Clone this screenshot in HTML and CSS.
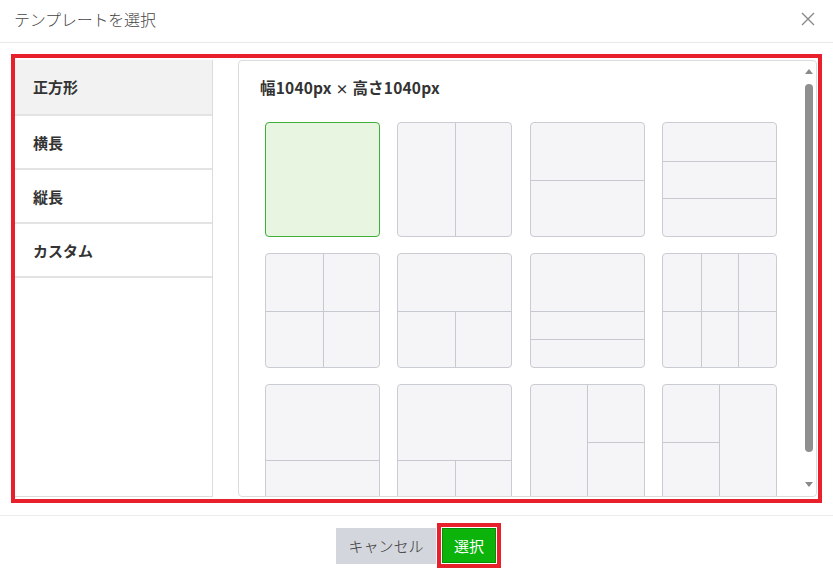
FILE: index.html
```html
<!DOCTYPE html>
<html lang="ja">
<head>
<meta charset="utf-8">
<title>テンプレートを選択</title>
<link rel="stylesheet" href="styles.css">
</head>
<body>
<div class="modal">
  <div class="modal-header">
    <span class="modal-title">テンプレートを選択</span>
    <svg class="close" width="14" height="14" viewBox="0 0 14 14"><path d="M1 1L13 13M13 1L1 13" stroke="#888" stroke-width="1.4" fill="none"/></svg>
  </div>
  <div class="modal-body">
    <div class="highlight">
      <ul class="sidebar">
        <li class="side-item active">正方形</li>
        <li class="side-item">横長</li>
        <li class="side-item">縦長</li>
        <li class="side-item">カスタム</li>
      </ul>
      <div class="panel">
        <div class="panel-scroll">
          <div class="panel-title">幅1040px <span class="times">×</span> 高さ1040px</div>
          <div class="grid">
            <div class="tile selected"></div>
            <div class="tile"><span class="vl" style="left:50%"></span></div>
            <div class="tile"><span class="hl" style="top:50%"></span></div>
            <div class="tile"><span class="hl" style="top:33.3%"></span><span class="hl" style="top:66.7%"></span></div>

            <div class="tile"><span class="vl" style="left:50%"></span><span class="hl" style="top:50%"></span></div>
            <div class="tile"><span class="hl" style="top:50%"></span><span class="vl" style="left:50%;top:50%"></span></div>
            <div class="tile"><span class="hl" style="top:50%"></span><span class="hl" style="top:75%"></span></div>
            <div class="tile"><span class="vl" style="left:33.3%"></span><span class="vl" style="left:66.7%"></span><span class="hl" style="top:50%"></span></div>

            <div class="tile"><span class="hl" style="top:66.7%"></span></div>
            <div class="tile"><span class="hl" style="top:66.7%"></span><span class="vl" style="left:50%;top:66.7%"></span></div>
            <div class="tile"><span class="vl" style="left:50%"></span><span class="hl" style="top:50%;left:50%"></span></div>
            <div class="tile"><span class="vl" style="left:50%"></span><span class="hl" style="top:50%;right:50%"></span></div>
          </div>
        </div>
        <div class="scrollbar">
          <span class="arrow up"></span>
          <span class="thumb"></span>
          <span class="arrow down"></span>
        </div>
      </div>
    </div>
  </div>
  <div class="modal-footer">
    <button class="btn btn-cancel">キャンセル</button>
    <span class="btn-outline"><button class="btn btn-select">選択</button></span>
  </div>
</div>
</body>
</html>
```
FILE: styles.css
```css
* { box-sizing: border-box; }
html, body { margin: 0; padding: 0; background: #fff; }
body {
  font-family: "Noto Sans CJK JP", "Noto Sans", "Liberation Sans", sans-serif;
  color: #333;
  width: 833px;
  height: 575px;
  overflow: hidden;
}
.modal { display: flex; flex-direction: column; height: 575px; }
.modal-header {
  height: 43px;
  display: flex;
  align-items: center;
  justify-content: space-between;
  padding: 0 18px 4px 14px;
  border-bottom: 1px solid #e8e8e8;
}
.modal-title { font-size: 16px; font-weight: 300; color: #444; letter-spacing: -0.2px; }
.close { display: block; }

.modal-body { padding: 11px 11px 0 11px; }
.highlight {
  border: 4px solid #e8202b;
  height: 449px;
  display: flex;
  padding: 2px 1px 2px 0;
  gap: 25px;
}
.sidebar {
  list-style: none;
  margin: 0;
  padding: 0;
  width: 198px;
  border: 1px solid #dcdcdc;
  border-left: none;
  border-top: none;
}
.side-item {
  height: 54px;
  display: flex;
  align-items: center;
  padding-left: 18px;
  font-size: 15px;
  font-weight: 700;
  color: #333;
  border-bottom: 2px solid #e3e3e3;
}
.side-item.active { background: #f2f2f2; height: 56px; padding-bottom: 2px; }

.panel {
  flex: 1;
  position: relative;
  border: 1px solid #dcdcdc;
  border-radius: 4px;
  overflow: hidden;
}
.panel-scroll { height: 100%; overflow: hidden; }
.panel-title {
  font-size: 15.5px;
  font-weight: 700;
  color: #333;
  padding: 16px 0 0 21px;
  line-height: 21px;
  height: 61px;
  letter-spacing: 0.2px;
}
.times { font-size: 13px; }
.grid {
  display: grid;
  grid-template-columns: repeat(4, 115px);
  grid-auto-rows: 115px;
  column-gap: 17.33px;
  row-gap: 16px;
  padding-left: 26px;
}
.tile {
  position: relative;
  background: #f5f5f7;
  border: 1px solid #c9ccd2;
  border-radius: 4px;
  overflow: hidden;
}
.tile.selected { background: #e7f5e1; border: 1.5px solid #3fae3a; }
.vl { position: absolute; top: 0; bottom: 0; width: 1px; background: #c6c9cf; }
.hl { position: absolute; left: 0; right: 0; height: 1px; background: #c6c9cf; }

.scrollbar {
  position: absolute;
  top: 0;
  right: 2px;
  bottom: 0;
  width: 10px;
  display: flex;
  flex-direction: column;
  align-items: center;
  padding: 8px 0 7px;
}
.arrow { width: 0; height: 0; border-left: 4px solid transparent; border-right: 4px solid transparent; }
.arrow.up { border-bottom: 5px solid #8a8a8a; }
.arrow.down { border-top: 5px solid #8a8a8a; }
.thumb {
  width: 8px;
  margin: 10px 0 30px;
  height: 368px;
  background: #8f8f8f;
  border-radius: 4px;
}

.modal-footer {
  margin-top: 12px;
  border-top: 1px solid #ececec;
  display: flex;
  justify-content: center;
  align-items: center;
  padding: 7px 0 0 4px;
}
.btn {
  font-family: inherit;
  font-size: 15px;
  border: none;
  cursor: pointer;
  margin: 0;
}
.btn-cancel {
  background: #d3d6dc;
  color: #333;
  width: 100px;
  height: 36px;
  font-weight: 300;
}
.btn-outline {
  display: inline-flex;
  border: 4.5px solid #e8202b;
  padding: 1px;
  margin-left: 1px;
}
.btn-select {
  background: #0bb30b;
  color: #fff;
  width: 54px;
  height: 35px;
  border: 1px solid #0a8d0a;
}
```
